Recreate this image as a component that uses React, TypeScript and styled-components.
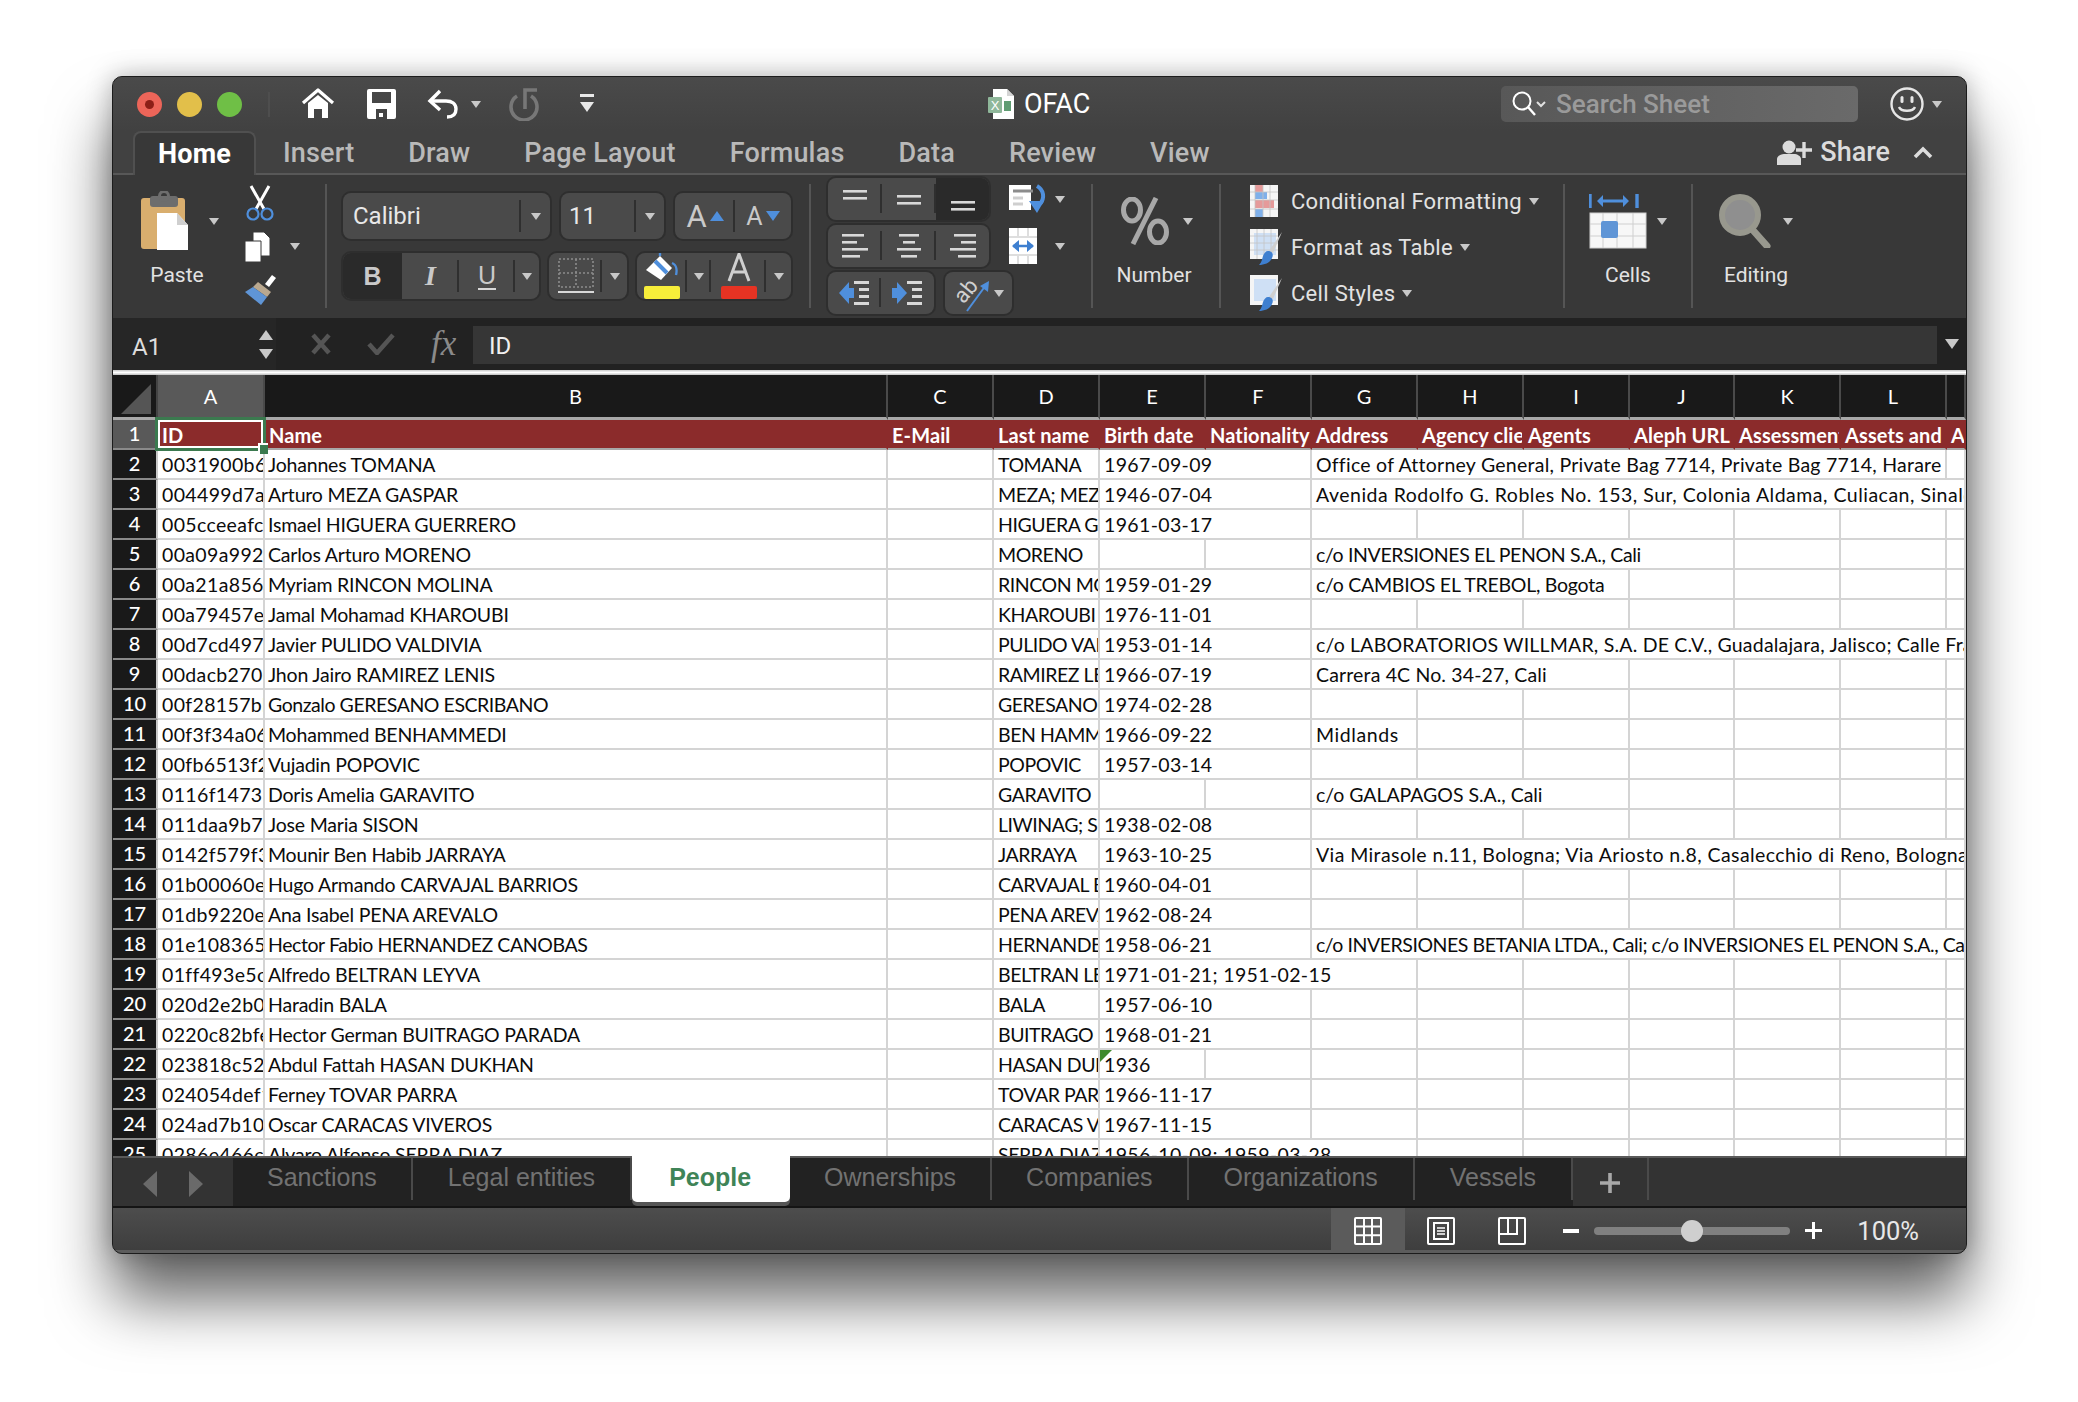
import styled, { createGlobalStyle } from "styled-components";

const GlobalStyle = createGlobalStyle`
    html, body {
        margin: 0;
        background: #ffffff;
    }
    * {
        box-sizing: border-box;
    }
`;

const UI_FONT = `Roboto, "Liberation Sans", sans-serif`;
const SHEET_FONT = `Lato, "Liberation Sans", sans-serif`;

const Page = styled.div`
    width: 2078px;
    height: 1402px;
    padding: 76px 0 0 112px;
    overflow: hidden;
`;

const Window = styled.div`
    display: flex;
    flex-direction: column;
    width: 1855px;
    height: 1178px;
    border: 1px solid #1c1c1c;
    border-radius: 10px;
    overflow: hidden;
    background: #3a3a3a;
    box-shadow: 0 46px 62px rgba(0, 0, 0, 0.6), 0 0 26px rgba(0, 0, 0, 0.28);
    font-family: ${UI_FONT};
`;

/* ---------- title bar ---------- */

const TitleBar = styled.div`
    display: flex;
    align-items: center;
    height: 54px;
    flex: none;
    padding-left: 24px;
    background: linear-gradient(#4a4a4a, #414141);
`;

const Lights = styled.div`
    display: flex;
    gap: 15px;
    padding-right: 26px;
    margin-right: 31px;
    border-right: 2px solid #4e4e4e;
`;

const Light = styled.span<{ $c: string }>`
    display: block;
    position: relative;
    width: 25px;
    height: 25px;
    border-radius: 50%;
    background: ${(p) => p.$c};
`;

const LightDot = styled.span`
    position: absolute;
    left: 8px;
    top: 8px;
    width: 9px;
    height: 9px;
    border-radius: 50%;
    background: #8c1f17;
`;

const QuickTools = styled.div`
    display: flex;
    align-items: center;
    width: 687px;
    gap: 4px;
`;

const QuickSlot = styled.span<{ $w: number }>`
    display: flex;
    align-items: center;
    width: ${(p) => p.$w}px;
    gap: 12px;
`;

const Caret = styled.span<{ $c?: string; $s?: number; $up?: boolean }>`
    display: inline-block;
    flex: none;
    width: 0;
    height: 0;
    border-left: ${(p) => p.$s ?? 5}px solid transparent;
    border-right: ${(p) => p.$s ?? 5}px solid transparent;
    ${(p) =>
        p.$up
            ? `border-bottom: ${(p.$s ?? 5) * 1.5}px solid ${p.$c ?? "#c8c8c8"};`
            : `border-top: ${(p.$s ?? 5) * 1.5}px solid ${p.$c ?? "#c8c8c8"};`}
`;

const DocTitle = styled.div`
    display: flex;
    align-items: center;
    gap: 10px;
    color: #ffffff;
    font-size: 27px;
`;

const SearchBox = styled.div`
    display: flex;
    align-items: center;
    gap: 9px;
    width: 357px;
    height: 36px;
    margin-left: auto;
    padding-left: 10px;
    border-radius: 5px;
    background: linear-gradient(90deg, #585858, #6a6a6a);
    color: #9a9a9a;
    font-size: 26px;
    font-weight: 500;
`;

const Account = styled.div`
    display: flex;
    align-items: center;
    gap: 8px;
    padding: 0 24px 0 32px;
`;

/* ---------- ribbon tabs ---------- */

const TabsRow = styled.div`
    display: flex;
    align-items: flex-end;
    height: 44px;
    flex: none;
    padding-left: 20px;
    background: #414141;
    border-bottom: 2px solid #585858;
`;

const RibbonTab = styled.div<{ $active?: boolean }>`
    display: flex;
    align-items: center;
    justify-content: center;
    height: 44px;
    margin-bottom: -2px;
    padding: 0 ${(p) => (p.$active ? 23 : 27)}px 1px;
    color: ${(p) => (p.$active ? "#ffffff" : "#b9b9b9")};
    font-size: 27px;
    letter-spacing: 0.18px;
    font-weight: ${(p) => (p.$active ? 700 : 500)};
    ${(p) =>
        p.$active &&
        `
        background: #383838;
        border: 2px solid #505050;
        border-bottom: none;
        border-radius: 8px 8px 0 0;
    `}
`;

const ShareArea = styled.div`
    display: flex;
    align-items: center;
    align-self: center;
    gap: 8px;
    margin-left: auto;
    padding-right: 33px;
    color: #dcdcdc;
    font-size: 27px;
    font-weight: 500;
`;

const ShareChevron = styled.span`
    display: flex;
    margin-left: 15px;
`;

/* ---------- ribbon ---------- */

const Ribbon = styled.div`
    display: flex;
    height: 143px;
    flex: none;
    background: #383838;
`;

const Group = styled.div<{ $w: number }>`
    display: flex;
    flex: none;
    width: ${(p) => p.$w}px;
`;

const Sep = styled.span`
    flex: none;
    width: 2px;
    height: 124px;
    margin-top: 9px;
    background: #555555;
`;

const BigTool = styled.div<{ $w?: number }>`
    display: flex;
    flex-direction: column;
    align-items: center;
    width: ${(p) => (p.$w ? `${p.$w}px` : "100%")};
    padding-top: 5px;
`;

const BigIcon = styled.div<{ $gap?: number; $left?: number }>`
    display: flex;
    align-items: center;
    gap: ${(p) => p.$gap ?? 10}px;
    height: 82px;
    padding-left: ${(p) => p.$left ?? 0}px;
`;

const BigLabel = styled.div`
    height: 26px;
    line-height: 26px;
    color: #e2e2e2;
    font-size: 21px;
`;

const SmallTools = styled.div`
    display: flex;
    flex-direction: column;
    justify-content: space-between;
    padding: 8px 0 8px 4px;
`;

const SmallTool = styled.div`
    display: flex;
    align-items: center;
    gap: 19px;
    height: 40px;
`;

const FontGroup = styled(Group)`
    flex-direction: column;
    gap: 14px;
    padding: 18px 0 0 16px;
`;

const ToolRow = styled.div<{ $gap?: number }>`
    display: flex;
    align-items: center;
    gap: ${(p) => p.$gap ?? 11}px;
`;

const Box = styled.div<{ $w: number; $h?: number }>`
    display: flex;
    flex: none;
    align-items: stretch;
    width: ${(p) => p.$w}px;
    height: ${(p) => p.$h ?? 46}px;
    border-radius: 8px;
    overflow: hidden;
    background: #4a4a4a;
    box-shadow: 0 0 0 2px #2e2e2e;
`;

const Seg = styled.div<{ $w?: number; $on?: boolean; $line?: boolean; $pad?: number }>`
    display: flex;
    align-items: center;
    justify-content: ${(p) => (p.$pad !== undefined ? "flex-start" : "center")};
    gap: 3px;
    flex: ${(p) => (p.$w ? "none" : 1)};
    width: ${(p) => (p.$w ? `${p.$w}px` : "auto")};
    padding-left: ${(p) => p.$pad ?? 0}px;
    background: ${(p) => (p.$on ? "#2a2a2a" : "transparent")};
    ${(p) =>
        p.$line &&
        `
        background-image: linear-gradient(#2f2f2f, #2f2f2f);
        background-size: 2px 70%;
        background-position: right center;
        background-repeat: no-repeat;
    `}
`;

const BoxText = styled.span<{ $size?: number }>`
    color: #e8e8e8;
    font-size: ${(p) => p.$size ?? 24}px;
`;

const FaceLetter = styled.span<{ $b?: boolean; $i?: boolean; $u?: boolean }>`
    color: #c9c9c9;
    font-size: ${(p) => (p.$i ? 28 : 25)}px;
    font-weight: ${(p) => (p.$b || p.$i ? 700 : 400)};
    font-style: ${(p) => (p.$i ? "italic" : "normal")};
    font-family: ${(p) => (p.$i ? `"Liberation Serif", serif` : `"Liberation Sans", sans-serif`)};
    ${(p) => p.$u && "border-bottom: 2px solid #d8d8d8; line-height: 26px;"}
`;

const GrowLetter = styled.span<{ $size: number }>`
    color: #c9c9c9;
    font-size: ${(p) => p.$size}px;
    line-height: 1;
`;

const AlignGroup = styled(Group)`
    flex-direction: column;
    gap: 5px;
    padding: 3px 0 0 17px;
`;

const AlignExtra = styled.span`
    display: flex;
    align-items: center;
    justify-content: space-between;
    width: 56px;
    margin-left: 20px;
`;

const StyleList = styled.div`
    display: flex;
    flex-direction: column;
    padding: 3px 0 0 29px;
`;

const StyleItem = styled.div`
    display: flex;
    align-items: center;
    gap: 7px;
    height: 46px;
    color: #e2e2e2;
    font-size: 22px;
    letter-spacing: 0.3px;
`;

const StyleIconSlot = styled.span`
    display: flex;
    width: 34px;
`;

/* ---------- formula bar ---------- */

const FormulaBar = styled.div`
    display: flex;
    height: 52px;
    flex: none;
    background: #222222;
`;

const NameBox = styled.div`
    display: flex;
    align-items: center;
    justify-content: space-between;
    width: 163px;
    padding: 6px 3px 0 19px;
    color: #dddddd;
    font-size: 24px;
    background: #262626;
`;

const Stepper = styled.div`
    display: flex;
    flex-direction: column;
    gap: 9px;
    margin-top: -5px;
`;

const FxTools = styled.div`
    display: flex;
    align-items: center;
    gap: 36px;
    width: 197px;
    padding: 0 0 0 35px;
`;

const FxMark = styled.span`
    color: #8a8a8a;
    font-family: "Liberation Serif", serif;
    font-size: 35px;
    font-style: italic;
`;

const FormulaInput = styled.div`
    display: flex;
    flex: 1;
    align-items: center;
    margin: 8px 0 6px;
    padding: 2px 0 0 16px;
    background: #363636;
    color: #f0f0f0;
    font-size: 24px;
`;

const FormulaDrop = styled.div`
    display: flex;
    align-items: center;
    justify-content: center;
    width: 29px;
`;

const FormulaEdge = styled.div`
    height: 5px;
    flex: none;
    background: linear-gradient(#c8c8c8, #ffffff 50%, #bdbdbd);
`;

/* ---------- sheet ---------- */

const COLUMNS =
    "45px 107px 623px 106px 106px 106px 106px 106px 106px 106px 105px 106px 106px 19px";

const Sheet = styled.div`
    position: relative;
    flex: 1;
    min-height: 0;
    overflow: hidden;
    background: #ffffff;
    font-family: ${SHEET_FONT};
`;

const Row = styled.div<{ $h?: number }>`
    display: grid;
    grid-template-columns: ${COLUMNS};
    height: ${(p) => p.$h ?? 30}px;
`;

const Corner = styled.div`
    background: #191919;
    border-right: 2px solid #444444;
    border-bottom: 3px solid #a8a8a8;
    padding: 9px 0 0 8px;
`;

const ColHead = styled.div<{ $on?: boolean }>`
    display: flex;
    align-items: center;
    justify-content: center;
    color: #ffffff;
    font-size: 20px;
    background: ${(p) => (p.$on ? "#595959" : "#191919")};
    border-right: 2px solid #4a4a4a;
    border-bottom: 3px solid #a8a8a8;
`;

const RowHead = styled.div<{ $on?: boolean }>`
    display: flex;
    align-items: center;
    justify-content: center;
    padding-bottom: 2px;
    color: #ffffff;
    font-size: 20px;
    font-weight: 500;
    background: ${(p) => (p.$on ? "#595959" : "#191919")};
    border-right: 2px solid #c8c8c8;
    border-bottom: 2px solid #8a8a8a;
`;

const Cell = styled.div<{ $span?: number; $flag?: boolean; $ls?: number; $pad?: number }>`
    position: relative;
    grid-column: span ${(p) => p.$span ?? 1};
    padding: 3px 0 0 ${(p) => p.$pad ?? 4}px;
    overflow: hidden;
    white-space: nowrap;
    line-height: 24px;
    color: #0c0c0c;
    font-size: 19.5px;
    letter-spacing: ${(p) => p.$ls ?? -0.2}px;
    border-right: 2px solid #d4d4d4;
    border-bottom: 2px solid #d4d4d4;
    ${(p) =>
        p.$flag &&
        `
        &::before {
            content: "";
            position: absolute;
            left: 0;
            top: 0;
            border-top: 12px solid #3f8a2c;
            border-right: 12px solid transparent;
        }
    `}
`;

const HeadCell = styled.div`
    padding: 3px 0 0 4px;
    overflow: hidden;
    white-space: nowrap;
    line-height: 24px;
    color: #ffffff;
    font-size: 20px;
    font-weight: 700;
    letter-spacing: 0.1px;
    background: #8b2b2b;
    border-right: 2px solid #8b2b2b;
    border-bottom: 2px solid #a8a8a8;
`;

const SelectedFrame = styled.div`
    position: absolute;
    left: 42px;
    top: 42px;
    width: 111px;
    height: 34px;
    border: 3px solid #3b7a4f;
    box-shadow: inset 0 0 0 2px #ffffff;
`;

const SelectedHandle = styled.span`
    position: absolute;
    right: -5px;
    bottom: -6px;
    width: 10px;
    height: 11px;
    background: #3b7a4f;
    border-top: 2px solid #ffffff;
    border-left: 2px solid #ffffff;
`;

/* ---------- sheet tabs ---------- */

const SheetTabs = styled.div`
    display: flex;
    height: 52px;
    flex: none;
    background: #333333;
    border-top: 2px solid #5a5a5a;
    border-bottom: 2px solid #141414;
    font-family: "Liberation Sans", sans-serif;
`;

const TabNav = styled.div`
    display: flex;
    align-items: center;
    gap: 32px;
    width: 120px;
    padding: 4px 0 0 30px;
`;

const TabStrip = styled.div`
    display: flex;
    align-items: flex-start;
    background: #222222;
`;

const SheetTab = styled.div<{ $on?: boolean; $pad: number }>`
    position: relative;
    height: 42px;
    padding: 1px ${(p) => p.$pad}px 0;
    line-height: 36px;
    color: ${(p) => (p.$on ? "#3f8457" : "#727272")};
    font-size: 25px;
    font-weight: ${(p) => (p.$on ? 700 : 400)};
    border-right: 2px solid ${(p) => (p.$on ? "transparent" : "#4a4a4a")};
    ${(p) =>
        p.$on &&
        `
        margin-top: -2px;
        height: 46px;
        padding-top: 3px;
        background: #ffffff;
        border-radius: 0 0 5px 5px;
        box-shadow: 0 4px 0 #555555;
    `}
`;

const AddTab = styled.div`
    display: flex;
    align-items: center;
    justify-content: center;
    width: 76px;
    height: 42px;
    padding-top: 8px;
    border-right: 2px solid #4a4a4a;
`;

/* ---------- status bar ---------- */

const StatusBar = styled.div`
    display: flex;
    flex: none;
    height: 45px;
    align-items: stretch;
    justify-content: flex-end;
    background: linear-gradient(#4d4d4d, #3e3e3e);
    border-bottom: 3px solid #5c5c5c;
`;

const ViewButton = styled.div<{ $on?: boolean }>`
    display: flex;
    align-items: center;
    justify-content: center;
    width: ${(p) => (p.$on ? 74 : 71)}px;
    padding-top: 3px;
    background: ${(p) => (p.$on ? "#5b5b5b" : "transparent")};
`;

const ZoomArea = styled.div`
    display: flex;
    align-items: center;
    gap: 15px;
    padding: 3px 47px 0 16px;
    color: #e8e8e8;
    font-size: 25.5px;
`;

const SliderTrack = styled.div`
    position: relative;
    width: 196px;
    height: 8px;
    border-radius: 4px;
    background: #808080;
`;

const SliderKnob = styled.span`
    position: absolute;
    left: 87px;
    top: -7px;
    width: 22px;
    height: 22px;
    border-radius: 50%;
    background: #cfcfcf;
`;

const ZoomValue = styled.span`
    margin-left: 20px;
`;

/* ---------- icons ---------- */

const HomeIcon = () => (
    <svg width="34" height="32" viewBox="0 0 34 32">
        <path d="M2 15 17 2l15 13" fill="none" stroke="#fff" strokeWidth="3.2" strokeLinejoin="round" />
        <path d="M7 15 17 7l10 8v15h-6v-9h-8v9H7z" fill="#fff" />
    </svg>
);

const SaveIcon = () => (
    <svg width="29" height="30" viewBox="0 0 29 30">
        <path
            fillRule="evenodd"
            d="M2 0h25a2 2 0 0 1 2 2v26a2 2 0 0 1-2 2H2a2 2 0 0 1-2-2V2a2 2 0 0 1 2-2zm3 3v11h19V3zM9 20v10h11V20zm3 4h4v4h-4z"
            fill="#fff"
        />
    </svg>
);

const UndoIcon = () => (
    <svg width="32" height="30" viewBox="0 0 32 30">
        <path d="M13 2 3 12l10 9" fill="none" stroke="#fff" strokeWidth="3.4" />
        <path d="M4 12h15c6 0 10 3 10 8s-3 8-9 8" fill="none" stroke="#fff" strokeWidth="3.4" />
    </svg>
);

const RedoIcon = () => (
    <svg width="30" height="34" viewBox="0 0 30 34">
        <path d="M8 9a13 13 0 1 0 14 0" fill="none" stroke="#777" strokeWidth="3.6" />
        <path d="M16 22V3h12" fill="none" stroke="#777" strokeWidth="3.6" />
    </svg>
);

const CustomizeIcon = () => (
    <svg width="16" height="20" viewBox="0 0 16 20">
        <rect x="1" y="0" width="14" height="3" fill="#e8e8e8" />
        <path d="M1 8h14l-7 10z" fill="#e8e8e8" />
    </svg>
);

const ExcelDocIcon = () => (
    <svg width="26" height="30" viewBox="0 0 26 30">
        <path d="M5 0h14l7 7v23H5z" fill="#ffffff" />
        <path d="M19 0l7 7h-7z" fill="#d4d4d4" />
        <rect x="0" y="8" width="14" height="16" rx="1" fill="#8fb79a" />
        <text x="7" y="21" textAnchor="middle" fontSize="13" fill="#fff" fontFamily="Liberation Sans">
            X
        </text>
        <path d="M16 12h7v10h-7z" fill="#5f9c72" />
    </svg>
);

const SearchGlass = () => (
    <svg width="36" height="28" viewBox="0 0 36 28">
        <circle cx="11" cy="11" r="8.5" fill="none" stroke="#fff" strokeWidth="2" />
        <path d="m17 17 7 8" stroke="#fff" strokeWidth="2.4" />
        <path d="m26 12 4 4 4-4" fill="none" stroke="#e0e0e0" strokeWidth="2" />
    </svg>
);

const SmileyIcon = () => (
    <svg width="34" height="34" viewBox="0 0 34 34">
        <circle cx="17" cy="17" r="15.5" fill="none" stroke="#e6e6e6" strokeWidth="2.4" />
        <rect x="10.5" y="9" width="3" height="7" rx="1.5" fill="#e6e6e6" />
        <rect x="20.5" y="9" width="3" height="7" rx="1.5" fill="#e6e6e6" />
        <path d="M9 20c2 5 14 5 16 0" fill="none" stroke="#e6e6e6" strokeWidth="2.4" />
    </svg>
);

const ShareIcon = () => (
    <svg width="35" height="25" viewBox="0 0 35 25">
        <circle cx="12" cy="7" r="6.5" fill="#dcdcdc" />
        <path d="M0 25v-6c0-3 4-5 7-5h10c3 0 7 2 7 5v6z" fill="#dcdcdc" />
        <path d="M27 2v16M19 10h16" stroke="#dcdcdc" strokeWidth="3.4" />
    </svg>
);

const ChevronUp = () => (
    <svg width="20" height="13" viewBox="0 0 20 13">
        <path d="m2 11 8-8 8 8" fill="none" stroke="#dcdcdc" strokeWidth="3.6" />
    </svg>
);

const PasteIcon = () => (
    <svg width="48" height="60" viewBox="0 0 48 60">
        <rect x="0" y="7" width="44" height="51" rx="3" fill="#d9ae6e" />
        <rect x="9" y="5" width="28" height="11" rx="3" fill="#6d6d6d" />
        <circle cx="23" cy="5" r="4.5" fill="none" stroke="#6d6d6d" strokeWidth="3" />
        <path d="M16 22h20l11 12v25H16z" fill="#ffffff" />
        <path d="M36 22l11 12H36z" fill="#cfcfcf" />
    </svg>
);

const ScissorsIcon = () => (
    <svg width="30" height="36" viewBox="0 0 30 36">
        <path d="M6 1 19 24M24 1 11 24" stroke="#ffffff" strokeWidth="3" />
        <circle cx="8" cy="29" r="5.5" fill="none" stroke="#4f8fdc" strokeWidth="2.2" />
        <circle cx="22" cy="29" r="5.5" fill="none" stroke="#4f8fdc" strokeWidth="2.2" />
    </svg>
);

const CopyIcon = () => (
    <svg width="26" height="30" viewBox="0 0 26 30">
        <path d="M8 0h11l6 6v18H8z" fill="#fff" stroke="#383838" />
        <path d="M0 9h16v21H0z" fill="#fff" stroke="#383838" />
    </svg>
);

const BrushIcon = () => (
    <svg width="32" height="30" viewBox="0 0 32 30">
        <path d="M20 9 27 0l4 3-7 9z" fill="#ffffff" />
        <path d="m13 7 13 10-4 5L8 12z" fill="#b9a88f" />
        <path d="M8 12 22 22l-6 8L0 17z" fill="#5f95d6" />
    </svg>
);

const FillBucket = () => (
    <svg width="38" height="50" viewBox="0 0 38 50">
        <path d="M3 19 17 5l12 12-11 12z" fill="#ffffff" />
        <path d="M12 10 24 22" stroke="#4f8fdc" strokeWidth="4" />
        <path d="M17 5V1M29 12c5 2 5 8 4 12" fill="none" stroke="#4f8fdc" strokeWidth="2.4" />
        <rect x="1" y="35" width="36" height="13" rx="2" fill="#f7ee3a" />
    </svg>
);

const FontColorIcon = () => (
    <svg width="38" height="50" viewBox="0 0 38 50">
        <path d="M9 30 19 3l10 27M13 21h12" fill="none" stroke="#cfcfcf" strokeWidth="3" />
        <rect x="1" y="35" width="36" height="13" rx="2" fill="#e63323" />
    </svg>
);

const BorderIcon = () => (
    <svg width="36" height="36" viewBox="0 0 36 36">
        <path d="M1 1h34v28H1zM18 1v28M1 15h34" fill="none" stroke="#8c8c8c" strokeWidth="1.6" strokeDasharray="2 2" />
        <path d="M0 34h36" stroke="#d8d8d8" strokeWidth="2" />
    </svg>
);

const LinesIcon = ({ rows }: { rows: number[][] }) => (
    <svg width="28" height="30" viewBox="0 0 28 30">
        {rows.map(([x, w, y], i) => (
            <rect key={i} x={x} y={y} width={w} height="2.6" fill="#d8d8d8" />
        ))}
    </svg>
);

const IndentIcon = ({ mirror }: { mirror?: boolean }) => (
    <svg width="32" height="30" viewBox="0 0 32 30">
        <path d={mirror ? "M0 10h5V4l10 11-10 11v-6H0z" : "M15 10h-5V4L0 15l10 11v-6h5z"} fill="#4f8fdc" />
        <rect x="15" y="3" width="15" height="3" fill="#d8d8d8" />
        <rect x="20" y="10" width="10" height="3" fill="#d8d8d8" />
        <rect x="20" y="17" width="10" height="3" fill="#d8d8d8" />
        <rect x="15" y="24" width="15" height="3" fill="#d8d8d8" />
    </svg>
);

const OrientIcon = () => (
    <svg width="38" height="40" viewBox="0 0 38 40">
        <text
            x="13"
            y="25"
            fontSize="22"
            fill="#cfcfcf"
            fontFamily="Roboto"
            transform="rotate(-50 13 18)"
            textAnchor="middle"
        >
            ab
        </text>
        <path d="M14 38 33 12" stroke="#4f8fdc" strokeWidth="2" />
        <path d="M36 8l-1 11-8-6z" fill="#4f8fdc" />
    </svg>
);

const WrapIcon = () => (
    <svg width="38" height="30" viewBox="0 0 38 30">
        <rect x="0" y="1" width="22" height="25" fill="#ffffff" />
        <path d="M4 7h20" stroke="#8c8c8c" strokeWidth="3" />
        <path d="M4 14h10M4 20h10" stroke="#cfcfcf" strokeWidth="3" />
        <path d="M28 2c7 4 8 12 3 18" fill="none" stroke="#4f8fdc" strokeWidth="4" />
        <path d="M20 17h15l-7 12z" fill="#4f8fdc" />
    </svg>
);

const MergeIcon = () => (
    <svg width="28" height="36" viewBox="0 0 28 36">
        <rect width="28" height="36" fill="#ffffff" />
        <path d="M9 0v8M19 0v8M9 28v8M19 28v8M0 9h28M0 27h28" stroke="#bdbdbd" />
        <path d="M4 18h20" stroke="#3e7fd0" strokeWidth="2.4" />
        <path d="M10 12 3 18l7 6zM18 12l7 6-7 6z" fill="#3e7fd0" />
    </svg>
);

const PercentIcon = () => (
    <svg width="48" height="48" viewBox="0 0 48 48">
        <ellipse cx="11" cy="13" rx="8.5" ry="11" fill="none" stroke="#a8a8a8" strokeWidth="5" />
        <ellipse cx="37" cy="35" rx="8.5" ry="11" fill="none" stroke="#a8a8a8" strokeWidth="5" />
        <path d="M35 1 12 47" stroke="#a8a8a8" strokeWidth="5" />
    </svg>
);

const CondFormatIcon = () => (
    <svg width="28" height="32" viewBox="0 0 28 32">
        <rect width="28" height="32" fill="#f5f5f5" />
        <rect x="5" y="0" width="8" height="7" fill="#e59a9a" />
        <rect x="5" y="7" width="12" height="7" fill="#7fb0ea" />
        <rect x="5" y="15" width="19" height="8" fill="#e59a9a" />
        <rect x="5" y="24" width="8" height="8" fill="#7fb0ea" />
        <path d="M0 7h28M0 15h28M0 24h28M5 0v32M13 0v32M20 0v32" stroke="#c4c4c4" strokeWidth="0.8" />
    </svg>
);

const TableBrushIcon = ({ plain }: { plain?: boolean }) => (
    <svg width="34" height="36" viewBox="0 0 34 36">
        <rect x="0" y="0" width="28" height="30" fill="#f5f5f5" />
        <rect x="4" y="4" width="22" height="22" fill="#cfe0f5" />
        {!plain && <path d="M7 0v30M14 0v30M21 0v30M0 7h28M0 14h28M0 21h28" stroke="#c4c4c4" strokeWidth="0.8" />}
        <path d="M32 3 23 24l-4-2z" fill="#cfcfcf" />
        <path d="M18 22c4 0 6 3 4 7-2 5-8 7-13 7 3-3 3-6 4-9 1-3 3-5 5-5z" fill="#3e7fd0" />
    </svg>
);

const CellsIcon = () => (
    <svg width="58" height="56" viewBox="0 0 58 56">
        <path d="M1 1v14M48 1v14" stroke="#4f8fdc" strokeWidth="3.4" />
        <path d="M10 8h28" stroke="#4f8fdc" strokeWidth="3" />
        <path d="M14 2 8 8l6 6zM34 2l6 6-6 6z" fill="#4f8fdc" />
        <rect x="1" y="20" width="56" height="35" fill="#f7f7f7" stroke="#cfcfcf" />
        <path d="M14 20v35M28 20v35M44 20v35M1 31h56M1 43h56" stroke="#cfcfcf" />
        <rect x="12" y="28" width="17" height="17" rx="2" fill="#5f95d6" />
    </svg>
);

const MagnifierIcon = () => (
    <svg width="54" height="54" viewBox="0 0 54 54">
        <path d="M32 34 48 52" stroke="#98988e" strokeWidth="7" strokeLinecap="round" />
        <circle cx="21" cy="21" r="18" fill="#8f8f8f" stroke="#98988e" strokeWidth="6" />
    </svg>
);

const CrossIcon = () => (
    <svg width="20" height="22" viewBox="0 0 20 22">
        <path d="m2 2 16 18M18 2 2 20" stroke="#555" strokeWidth="4.5" />
    </svg>
);

const CheckIcon = () => (
    <svg width="28" height="22" viewBox="0 0 28 22">
        <path d="m2 11 8 9L26 2" fill="none" stroke="#555" strokeWidth="4.5" />
    </svg>
);

const CornerMark = () => (
    <svg width="30" height="30" viewBox="0 0 30 30">
        <path d="M30 0v30H0z" fill="#555555" />
    </svg>
);

const NavArrow = ({ right }: { right?: boolean }) => (
    <svg width="14" height="26" viewBox="0 0 14 26">
        <path d={right ? "M0 0 14 13 0 26z" : "M14 0 0 13l14 13z"} fill="#6a6a6a" />
    </svg>
);

const PlusMark = ({ c, size }: { c: string; size: number }) => (
    <svg width={size} height={size} viewBox="0 0 20 20">
        <path d="M10 0v20M0 10h20" stroke={c} strokeWidth="3.6" />
    </svg>
);

const GridViewIcon = () => (
    <svg width="28" height="28" viewBox="0 0 28 28">
        <rect x="1" y="1" width="26" height="26" rx="1" fill="none" stroke="#fff" strokeWidth="2" />
        <path d="M10 1v26M18 1v26M1 9.6h26M1 18.3h26" stroke="#fff" strokeWidth="2" />
    </svg>
);

const PageViewIcon = () => (
    <svg width="28" height="28" viewBox="0 0 28 28">
        <rect x="1" y="1" width="26" height="26" rx="1" fill="none" stroke="#fff" strokeWidth="2" />
        <rect x="7" y="6" width="14" height="16" fill="none" stroke="#fff" strokeWidth="2" />
        <path d="M10 11h8M10 14h8M10 17h8" stroke="#fff" strokeWidth="1.6" />
    </svg>
);

const BreakViewIcon = () => (
    <svg width="28" height="28" viewBox="0 0 28 28">
        <rect x="1" y="1" width="26" height="26" rx="1" fill="none" stroke="#fff" strokeWidth="2" />
        <path d="M1 17h18V1M10 1v16" fill="none" stroke="#fff" strokeWidth="2" />
    </svg>
);

const MinusMark = () => (
    <svg width="16" height="20" viewBox="0 0 16 20">
        <path d="M0 10h16" stroke="#fff" strokeWidth="4" />
    </svg>
);

/* ---------- data ---------- */

const COLUMN_LETTERS = ["A", "B", "C", "D", "E", "F", "G", "H", "I", "J", "K", "L", ""];

const HEADINGS = [
    "ID",
    "Name",
    "E-Mail",
    "Last name",
    "Birth date",
    "Nationality",
    "Address",
    "Agency clients",
    "Agents",
    "Aleph URL",
    "Assessments",
    "Assets and liabilities",
    "Associates",
];

interface Person {
    id: string;
    name: string;
    nameLs?: number;
    last: string;
    birth?: string;
    birthSpan?: number;
    flag?: boolean;
    addr?: string;
    addrSpan?: number;
    addrLs?: number;
}

const PEOPLE: Person[] = [
    { id: "0031900b6e", name: "Johannes TOMANA", last: "TOMANA", birth: "1967-09-09", addr: "Office of Attorney General, Private Bag 7714, Private Bag 7714, Harare", addrSpan: 6 },
    { id: "004499d7a2", name: "Arturo MEZA GASPAR", last: "MEZA; MEZA GASPAR", birth: "1946-07-04", addr: "Avenida Rodolfo G. Robles No. 153, Sur, Colonia Aldama, Culiacan, Sinaloa", addrSpan: 7, addrLs: 0.5 },
    { id: "005cceeafc", name: "Ismael HIGUERA GUERRERO", last: "HIGUERA GUERRERO", birth: "1961-03-17" },
    { id: "00a09a9921", name: "Carlos Arturo MORENO", last: "MORENO", addr: "c/o INVERSIONES EL PENON S.A., Cali", addrSpan: 4, addrLs: -0.35 },
    { id: "00a21a8566", name: "Myriam RINCON MOLINA", last: "RINCON MOLINA", birth: "1959-01-29", addr: "c/o CAMBIOS EL TREBOL, Bogota", addrSpan: 3, addrLs: -0.25 },
    { id: "00a79457e1", name: "Jamal Mohamad KHAROUBI", last: "KHAROUBI", birth: "1976-11-01" },
    { id: "00d7cd4971", name: "Javier PULIDO VALDIVIA", last: "PULIDO VALDIVIA", birth: "1953-01-14", addr: "c/o LABORATORIOS WILLMAR, S.A. DE C.V., Guadalajara, Jalisco; Calle Francisco", addrSpan: 7, addrLs: 0.2 },
    { id: "00dacb270c", name: "Jhon Jairo RAMIREZ LENIS", last: "RAMIREZ LENIS", birth: "1966-07-19", addr: "Carrera 4C No. 34-27, Cali", addrSpan: 3, addrLs: 0.15 },
    { id: "00f28157bb", name: "Gonzalo GERESANO ESCRIBANO", nameLs: -0.45, last: "GERESANO", birth: "1974-02-28" },
    { id: "00f3f34a06", name: "Mohammed BENHAMMEDI", last: "BEN HAMMEDI", birth: "1966-09-22", addr: "Midlands", addrSpan: 1, addrLs: 0.6 },
    { id: "00fb6513f2", name: "Vujadin POPOVIC", last: "POPOVIC", birth: "1957-03-14" },
    { id: "0116f14733", name: "Doris Amelia GARAVITO", last: "GARAVITO", addr: "c/o GALAPAGOS S.A., Cali", addrSpan: 3, addrLs: -0.03 },
    { id: "011daa9b71", name: "Jose Maria SISON", last: "LIWINAG; SISON", birth: "1938-02-08" },
    { id: "0142f579f3", name: "Mounir Ben Habib JARRAYA", last: "JARRAYA", birth: "1963-10-25", addr: "Via Mirasole n.11, Bologna; Via Ariosto n.8, Casalecchio di Reno, Bologna", addrSpan: 7, addrLs: 0.4 },
    { id: "01b00060e1", name: "Hugo Armando CARVAJAL BARRIOS", last: "CARVAJAL BARRIOS", birth: "1960-04-01" },
    { id: "01db9220e1", name: "Ana Isabel PENA AREVALO", last: "PENA AREVALO", birth: "1962-08-24" },
    { id: "01e1083655", name: "Hector Fabio HERNANDEZ CANOBAS", nameLs: -0.42, last: "HERNANDEZ CANOBAS", birth: "1958-06-21", addr: "c/o INVERSIONES BETANIA LTDA., Cali; c/o INVERSIONES EL PENON S.A., Cali", addrSpan: 7, addrLs: -0.45 },
    { id: "01ff493e5c", name: "Alfredo BELTRAN LEYVA", last: "BELTRAN LEYVA", birth: "1971-01-21; 1951-02-15", birthSpan: 3 },
    { id: "020d2e2b0c", name: "Haradin BALA", last: "BALA", birth: "1957-06-10" },
    { id: "0220c82bfe", name: "Hector German BUITRAGO PARADA", last: "BUITRAGO PARADA", birth: "1968-01-21" },
    { id: "023818c52a", name: "Abdul Fattah HASAN DUKHAN", last: "HASAN DUKHAN", birth: "1936", birthSpan: 1, flag: true },
    { id: "024054def1", name: "Ferney TOVAR PARRA", last: "TOVAR PARRA", birth: "1966-11-17" },
    { id: "024ad7b10c", name: "Oscar CARACAS VIVEROS", last: "CARACAS VIVEROS", birth: "1967-11-15" },
    { id: "0286e466c1", name: "Alvaro Alfonso SERRA DIAZ", last: "SERRA DIAZ", birth: "1956-10-09; 1959-03-28", birthSpan: 3 },
];

const SHEET_NAMES = [
    { name: "Sanctions", pad: 34 },
    { name: "Legal entities", pad: 35 },
    { name: "People", pad: 37 },
    { name: "Ownerships", pad: 34 },
    { name: "Companies", pad: 34 },
    { name: "Organizations", pad: 35 },
    { name: "Vessels", pad: 35 },
];

const RIBBON_TABS = ["Insert", "Draw", "Page Layout", "Formulas", "Data", "Review", "View"];

// columns G..M = 7, E and F = 2
const PersonRow = ({ person, index }: { person: Person; index: number }) => {
    const birthSpan = person.birth ? person.birthSpan ?? 2 : 1;
    const addrSpan = person.addr ? person.addrSpan ?? 1 : 1;
    const afterBirth = Math.max(0, 2 - birthSpan);
    const freeInG = birthSpan > 2 ? birthSpan - 2 : 0;
    const restCount = person.addr ? 7 - addrSpan : 7 - Math.max(freeInG, 1);
    return (
        <Row>
            <RowHead>{index}</RowHead>
            <Cell $ls={0.35}>{person.id}</Cell>
            <Cell $pad={3} $ls={person.nameLs}>
                {person.name}
            </Cell>
            <Cell />
            <Cell $ls={-0.45}>{person.last}</Cell>
            <Cell $span={birthSpan} $flag={person.flag} $ls={0.35}>
                {person.birth}
            </Cell>
            {Array.from({ length: afterBirth }).map((_, i) => (
                <Cell key={`f${i}`} />
            ))}
            {freeInG === 0 && (
                <Cell $span={addrSpan} $ls={person.addrLs ?? 0.25}>
                    {person.addr}
                </Cell>
            )}
            {Array.from({ length: restCount }).map((_, i) => (
                <Cell key={`r${i}`} />
            ))}
        </Row>
    );
};

export default function App() {
    return (
        <Page>
            <GlobalStyle />
            <Window>
                <TitleBar>
                    <Lights>
                        <Light $c="#ec6559">
                            <LightDot />
                        </Light>
                        <Light $c="#e2bf4a" />
                        <Light $c="#6fbf46" />
                    </Lights>
                    <QuickTools>
                        <QuickSlot $w={62}>
                            <HomeIcon />
                        </QuickSlot>
                        <QuickSlot $w={56}>
                            <SaveIcon />
                        </QuickSlot>
                        <QuickSlot $w={78}>
                            <UndoIcon />
                            <Caret />
                        </QuickSlot>
                        <QuickSlot $w={66}>
                            <RedoIcon />
                        </QuickSlot>
                        <QuickSlot $w={20}>
                            <CustomizeIcon />
                        </QuickSlot>
                    </QuickTools>
                    <DocTitle>
                        <ExcelDocIcon />
                        OFAC
                    </DocTitle>
                    <SearchBox>
                        <SearchGlass />
                        Search Sheet
                    </SearchBox>
                    <Account>
                        <SmileyIcon />
                        <Caret />
                    </Account>
                </TitleBar>

                <TabsRow>
                    <RibbonTab $active>Home</RibbonTab>
                    {RIBBON_TABS.map((t) => (
                        <RibbonTab key={t}>{t}</RibbonTab>
                    ))}
                    <ShareArea>
                        <ShareIcon />
                        Share
                        <ShareChevron>
                            <ChevronUp />
                        </ShareChevron>
                    </ShareArea>
                </TabsRow>

                <Ribbon>
                    <Group $w={212}>
                        <BigTool $w={128}>
                            <BigIcon $gap={20} $left={6}>
                                <PasteIcon />
                                <Caret />
                            </BigIcon>
                            <BigLabel>Paste</BigLabel>
                        </BigTool>
                        <SmallTools>
                            <SmallTool>
                                <ScissorsIcon />
                            </SmallTool>
                            <SmallTool>
                                <CopyIcon />
                                <Caret />
                            </SmallTool>
                            <SmallTool>
                                <BrushIcon />
                            </SmallTool>
                        </SmallTools>
                    </Group>
                    <Sep />
                    <FontGroup $w={482}>
                        <ToolRow>
                            <Box $w={207}>
                                <Seg $pad={10} $line $w={178}>
                                    <BoxText>Calibri</BoxText>
                                </Seg>
                                <Seg>
                                    <Caret />
                                </Seg>
                            </Box>
                            <Box $w={103}>
                                <Seg $pad={8} $line $w={75}>
                                    <BoxText>11</BoxText>
                                </Seg>
                                <Seg>
                                    <Caret />
                                </Seg>
                            </Box>
                            <Box $w={116}>
                                <Seg $line $w={60}>
                                    <GrowLetter $size={31}>A</GrowLetter>
                                    <Caret $up $c="#4f8fdc" $s={7} />
                                </Seg>
                                <Seg>
                                    <GrowLetter $size={25}>A</GrowLetter>
                                    <Caret $c="#4f8fdc" $s={7} />
                                </Seg>
                            </Box>
                        </ToolRow>
                        <ToolRow $gap={10}>
                            <Box $w={196}>
                                <Seg $on $w={59}>
                                    <FaceLetter $b>B</FaceLetter>
                                </Seg>
                                <Seg $line $w={57}>
                                    <FaceLetter $i>I</FaceLetter>
                                </Seg>
                                <Seg $line $w={56}>
                                    <FaceLetter $u>U</FaceLetter>
                                </Seg>
                                <Seg>
                                    <Caret />
                                </Seg>
                            </Box>
                            <Box $w={78}>
                                <Seg $line $w={53}>
                                    <BorderIcon />
                                </Seg>
                                <Seg>
                                    <Caret />
                                </Seg>
                            </Box>
                            <Box $w={154}>
                                <Seg $line $w={50}>
                                    <FillBucket />
                                </Seg>
                                <Seg $line $w={24}>
                                    <Caret />
                                </Seg>
                                <Seg $line $w={55}>
                                    <FontColorIcon />
                                </Seg>
                                <Seg>
                                    <Caret />
                                </Seg>
                            </Box>
                        </ToolRow>
                    </FontGroup>
                    <Sep />
                    <AlignGroup $w={280}>
                        <ToolRow $gap={0}>
                            <Box $w={161} $h={42}>
                                <Seg $line $w={54}>
                                    <LinesIcon rows={[[2, 24, 6], [2, 24, 13]]} />
                                </Seg>
                                <Seg $line $w={54}>
                                    <LinesIcon rows={[[2, 24, 11], [2, 24, 18]]} />
                                </Seg>
                                <Seg $on>
                                    <LinesIcon rows={[[2, 24, 17], [2, 24, 24]]} />
                                </Seg>
                            </Box>
                            <AlignExtra>
                                <WrapIcon />
                                <Caret />
                            </AlignExtra>
                        </ToolRow>
                        <ToolRow $gap={0}>
                            <Box $w={161} $h={42}>
                                <Seg $line $w={54}>
                                    <LinesIcon rows={[[1, 22, 3], [1, 15, 10], [1, 26, 17], [1, 18, 24]]} />
                                </Seg>
                                <Seg $line $w={54}>
                                    <LinesIcon rows={[[4, 20, 3], [8, 12, 10], [2, 24, 17], [6, 16, 24]]} />
                                </Seg>
                                <Seg>
                                    <LinesIcon rows={[[5, 22, 3], [12, 15, 10], [1, 26, 17], [9, 18, 24]]} />
                                </Seg>
                            </Box>
                            <AlignExtra>
                                <MergeIcon />
                                <Caret />
                            </AlignExtra>
                        </ToolRow>
                        <ToolRow $gap={11}>
                            <Box $w={106} $h={42}>
                                <Seg $line $w={53}>
                                    <IndentIcon />
                                </Seg>
                                <Seg>
                                    <IndentIcon mirror />
                                </Seg>
                            </Box>
                            <Box $w={67} $h={42}>
                                <Seg>
                                    <OrientIcon />
                                    <Caret />
                                </Seg>
                            </Box>
                        </ToolRow>
                    </AlignGroup>
                    <Sep />
                    <Group $w={126}>
                        <BigTool $w={122}>
                            <BigIcon $gap={14} $left={6}>
                                <PercentIcon />
                                <Caret />
                            </BigIcon>
                            <BigLabel>Number</BigLabel>
                        </BigTool>
                    </Group>
                    <Sep />
                    <Group $w={342}>
                        <StyleList>
                            <StyleItem>
                                <StyleIconSlot>
                                    <CondFormatIcon />
                                </StyleIconSlot>
                                Conditional Formatting
                                <Caret />
                            </StyleItem>
                            <StyleItem>
                                <StyleIconSlot>
                                    <TableBrushIcon />
                                </StyleIconSlot>
                                Format as Table
                                <Caret />
                            </StyleItem>
                            <StyleItem>
                                <StyleIconSlot>
                                    <TableBrushIcon plain />
                                </StyleIconSlot>
                                Cell Styles
                                <Caret />
                            </StyleItem>
                        </StyleList>
                    </Group>
                    <Sep />
                    <Group $w={126}>
                        <BigTool>
                            <BigIcon>
                                <CellsIcon />
                                <Caret />
                            </BigIcon>
                            <BigLabel>Cells</BigLabel>
                        </BigTool>
                    </Group>
                    <Sep />
                    <Group $w={126}>
                        <BigTool>
                            <BigIcon>
                                <MagnifierIcon />
                                <Caret />
                            </BigIcon>
                            <BigLabel>Editing</BigLabel>
                        </BigTool>
                    </Group>
                </Ribbon>

                <FormulaBar>
                    <NameBox>
                        A1
                        <Stepper>
                            <Caret $up $s={7} />
                            <Caret $s={7} />
                        </Stepper>
                    </NameBox>
                    <FxTools>
                        <CrossIcon />
                        <CheckIcon />
                        <FxMark>fx</FxMark>
                    </FxTools>
                    <FormulaInput>ID</FormulaInput>
                    <FormulaDrop>
                        <Caret $s={7} />
                    </FormulaDrop>
                </FormulaBar>
                <FormulaEdge />

                <Sheet>
                    <Row $h={45}>
                        <Corner>
                            <CornerMark />
                        </Corner>
                        {COLUMN_LETTERS.map((c, i) => (
                            <ColHead key={i} $on={c === "A"}>
                                {c}
                            </ColHead>
                        ))}
                    </Row>
                    <Row>
                        <RowHead $on>1</RowHead>
                        {HEADINGS.map((h) => (
                            <HeadCell key={h}>{h}</HeadCell>
                        ))}
                    </Row>
                    {PEOPLE.map((p, i) => (
                        <PersonRow key={p.id} person={p} index={i + 2} />
                    ))}
                    <SelectedFrame>
                        <SelectedHandle />
                    </SelectedFrame>
                </Sheet>

                <SheetTabs>
                    <TabNav>
                        <NavArrow />
                        <NavArrow right />
                    </TabNav>
                    <TabStrip>
                        {SHEET_NAMES.map((n) => (
                            <SheetTab key={n.name} $on={n.name === "People"} $pad={n.pad}>
                                {n.name}
                            </SheetTab>
                        ))}
                    </TabStrip>
                    <AddTab>
                        <PlusMark c="#a8a8a8" size={20} />
                    </AddTab>
                </SheetTabs>

                <StatusBar>
                    <ViewButton $on>
                        <GridViewIcon />
                    </ViewButton>
                    <ViewButton>
                        <PageViewIcon />
                    </ViewButton>
                    <ViewButton>
                        <BreakViewIcon />
                    </ViewButton>
                    <ZoomArea>
                        <MinusMark />
                        <SliderTrack>
                            <SliderKnob />
                        </SliderTrack>
                        <PlusMark c="#ffffff" size={17} />
                        <ZoomValue>100%</ZoomValue>
                    </ZoomArea>
                </StatusBar>
            </Window>
        </Page>
    );
}
